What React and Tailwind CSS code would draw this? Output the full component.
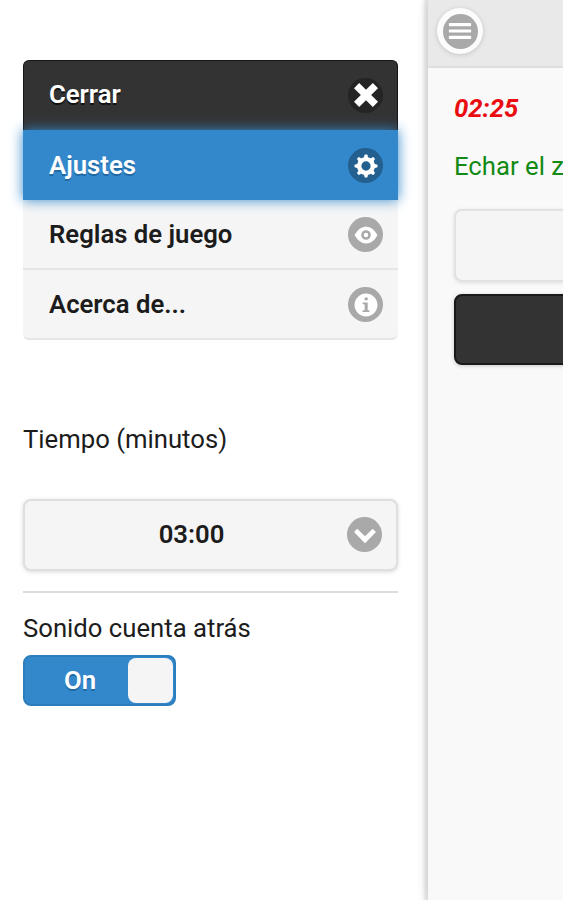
const gearTeeth = [0, 45, 90, 135, 180, 225, 270, 315];

const iconShapes = {
  close: <path d="M14 3 11 0 7 4 3 0 0 3 4 7 0 11 3 14 7 10 11 14 14 11 10 7z" />,
  gear: (
    <g>
      <circle cx="7" cy="7" r="4" fill="none" stroke="white" strokeWidth="2.6" />
      {gearTeeth.map((angle) => (
        <path
          key={angle}
          d="M5.700 2.500 6.100.7Q6.200.3 6.500.3h1q.3 0 .4.400l.4 1.800z"
          transform={`rotate(${angle} 7 7)`}
        />
      ))}
    </g>
  ),
  eye: (
    <path
      fillRule="evenodd"
      d="M7 2Q3 2.200.3 7 3 11.800 7 12t6.700-5Q11 2.200 7 2zm0 2.200a2.800 2.800 0 1 1 0 5.600 2.800 2.800 0 0 1 0-5.600zm0 1.500a1.300 1.300 0 1 0 0 2.600 1.300 1.300 0 0 0 0-2.600z"
    />
  ),
  info: (
    <path
      fillRule="evenodd"
      d="M7 .3a6.700 6.700 0 1 0 0 13.400A6.700 6.700 0 0 0 7 .3zM6.200 2.600H8v1.700H6.200zM5 5.500h3v4.600h1v1H5v-1h1.200V6.500H5z"
    />
  ),
  down: <path d="M11.500 3.300 7 7.700 2.500 3.300.6 5.200 7 11.800l6.400-6.600z" />,
  bars: (
    <g>
      <rect x="0.500" y="2.400" width="13" height="1.800" rx="0.400" />
      <rect x="0.500" y="6.100" width="13" height="1.800" rx="0.400" />
      <rect x="0.500" y="9.800" width="13" height="1.800" rx="0.400" />
    </g>
  ),
};

function RoundIcon({ name, className = "bg-[#a9a9a9]" }) {
  return (
    <span className={`flex size-[35px] shrink-0 items-center justify-center rounded-full ${className}`}>
      <svg viewBox="0 0 14 14" className="size-6 overflow-visible fill-white">
        {iconShapes[name]}
      </svg>
    </span>
  );
}

const menu = [
  {
    label: "Cerrar",
    icon: "close",
    row: "h-[70px] rounded-t-md border border-b-0 border-[#151515] bg-[#333] pr-[14px] pb-px pl-[25px] text-white [text-shadow:0_2px_0_#111]",
    disc: "bg-[#242424]",
  },
  {
    label: "Ajustes",
    icon: "gear",
    row: "relative h-[70px] bg-[#3388cc] pr-[15px] pl-[26px] pt-px text-white shadow-[0_0_12px_#3388cc] [text-shadow:0_2px_0_#1f6aa5]",
    disc: "bg-[#235f8f]",
  },
  {
    label: "Reglas de juego",
    icon: "eye",
    row: "h-[70px] border-b-2 border-[#e6e6e6] bg-[#f5f5f5] pt-px pr-[15px] pl-[26px]",
  },
  {
    label: "Acerca de...",
    icon: "info",
    row: "h-[70px] rounded-b-md border-b-2 border-[#e6e6e6] bg-[#f5f5f5] pt-px pr-[15px] pl-[26px]",
  },
];

function SidePanel() {
  return (
    <aside className="w-[428px] shrink-0 bg-white pt-[60px] pr-[30px] pl-[23px]">
      <nav>
        {menu.map((item) => (
          <button
            key={item.label}
            type="button"
            className={`flex w-full items-center justify-between font-semibold ${item.row}`}
          >
            <span className="pb-px">{item.label}</span>
            <RoundIcon name={item.icon} className={item.disc} />
          </button>
        ))}
      </nav>

      <p className="mt-[83px] leading-8">Tiempo (minutos)</p>

      <button
        type="button"
        className="mt-[44px] flex h-[72px] w-full items-center rounded-lg border-2 border-[#dfdfdf] bg-[#f5f5f5] pr-[14px] pb-px font-semibold shadow-[0_1px_4px_#00000026]"
      >
        <span className="flex-1 pl-[11px] text-center">03:00</span>
        <RoundIcon name="down" />
      </button>

      <hr className="mt-[20px] border-t-2 border-[#dcdcdc]" />

      <p className="mt-[19px] leading-8">Sonido cuenta atrás</p>

      <button
        type="button"
        role="switch"
        aria-checked="true"
        className="mt-[11px] flex h-[51px] w-[153px] items-center rounded-lg border-2 border-[#2b7ebd] bg-[#3388cc] pr-px font-semibold text-white [text-shadow:0_2px_0_#1f6aa5]"
      >
        <span className="flex-1 pl-[7px] text-center">On</span>
        <span className="h-[45px] w-[45px] rounded-lg bg-[#f5f5f5]" />
      </button>
    </aside>
  );
}

function GamePage() {
  return (
    <main className="relative min-w-0 flex-1 bg-[#f9f9f9] shadow-[-2px_0_3px_2px_#00000018,-2px_0_10px_#0000001c]">
      <header className="h-[68px] border-b-2 border-[#dedede] bg-[#e9e9e9] pt-[8px] pl-[9px]">
        <button
          type="button"
          className="flex size-[46px] items-center justify-center rounded-full bg-[#fcfcfc] shadow-[0_1px_5px_#00000028]"
        >
          <RoundIcon name="bars" />
        </button>
      </header>

      <div className="pl-[26px]">
        <p className="pt-[24px] leading-8 font-bold text-[#e90c10] italic">02:25</p>
        <p className="mt-[26px] leading-8 whitespace-nowrap text-[#138a13]">Echar el z</p>
        {/* both buttons run past the right edge of the window */}
        <div className="mt-[27px] -mr-5 h-[73px] rounded-lg border-2 border-[#e2e2e2] bg-[#f5f5f5] shadow-[0_1px_4px_#0000001c]" />
        <div className="mt-[12px] -mr-5 h-[71px] rounded-lg border-2 border-[#191919] bg-[#333] shadow-[0_1px_4px_#00000033]" />
      </div>
    </main>
  );
}

export default function App() {
  return (
    <div className="flex h-screen w-full overflow-hidden bg-white font-[Roboto,sans-serif] text-[25.7px] text-[#1c1c1c]">
      <SidePanel />
      <GamePage />
    </div>
  );
}
